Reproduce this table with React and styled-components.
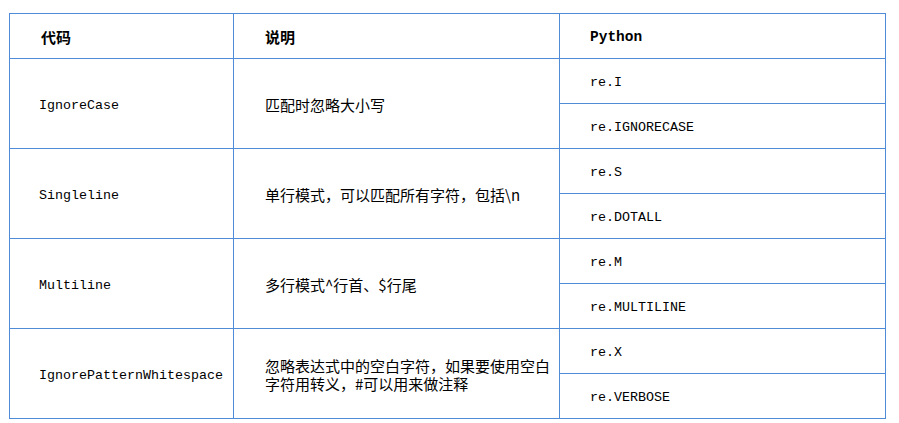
import React from 'react';
import styled, { createGlobalStyle } from 'styled-components';

const GlobalStyle = createGlobalStyle`
  html, body {
    margin: 0;
    padding: 0;
    background: #ffffff;
  }
  body {
    font-family: "Noto Sans CJK SC", sans-serif;
    color: #000;
  }
`;

const Page = styled.div`
  padding: 13px 0 0 9px;
`;

const Table = styled.table`
  border-collapse: collapse;
  table-layout: fixed;
  width: 877px;
`;

const HeadCell = styled.th`
  border: 1px solid #4f8bd6;
  height: 42px;
  padding: 2px 0 0 ${(p) => p.$pad || 30}px;
  text-align: left;
  font-weight: bold;
  font-size: ${(p) => (p.$mono ? '14.5px' : '15px')};
  font-family: ${(p) =>
    p.$mono ? '"Liberation Mono", monospace' : '"Noto Sans CJK SC", sans-serif'};
  line-height: 18px;
  vertical-align: middle;
`;

const Cell = styled.td`
  border: 1px solid #4f8bd6;
  height: ${(p) => (p.$mono ? '40px' : '42px')};
  padding: ${(p) => (p.$mono ? '4px' : '2px')} 8px 0 ${(p) => p.$pad || 30}px;
  vertical-align: middle;
  font-size: ${(p) => (p.$mono ? '13.33px' : '15px')};
  font-family: ${(p) =>
    p.$mono ? '"Liberation Mono", monospace' : '"Noto Sans CJK SC", sans-serif'};
  line-height: 18px;
  white-space: ${(p) => (p.$mono ? 'nowrap' : 'normal')};
`;

const rows = [
  { code: 'IgnoreCase', desc: '匹配时忽略大小写', py: ['re.I', 're.IGNORECASE'] },
  { code: 'Singleline', desc: '单行模式，可以匹配所有字符，包括\\n', py: ['re.S', 're.DOTALL'] },
  { code: 'Multiline', desc: '多行模式^行首、$行尾', py: ['re.M', 're.MULTILINE'] },
  {
    code: 'IgnorePatternWhitespace',
    desc: '忽略表达式中的空白字符，如果要使用空白字符用转义，#可以用来做注释',
    py: ['re.X', 're.VERBOSE'],
  },
];

export default function App() {
  return (
    <Page>
      <GlobalStyle />
      <Table>
        <colgroup>
          <col style={{ width: 224 }} />
          <col style={{ width: 326 }} />
          <col style={{ width: 326 }} />
        </colgroup>
        <thead>
          <tr>
            <HeadCell $pad={31}>代码</HeadCell>
            <HeadCell $pad={31}>说明</HeadCell>
            <HeadCell $pad={30} $mono>Python</HeadCell>
          </tr>
        </thead>
        <tbody>
          {rows.map((r) => (
            <React.Fragment key={r.code}>
              <tr>
                <Cell rowSpan={2} $mono $pad={29}>{r.code}</Cell>
                <Cell rowSpan={2} $pad={31}>{r.desc}</Cell>
                <Cell $mono $pad={30}>{r.py[0]}</Cell>
              </tr>
              <tr>
                <Cell $mono $pad={30}>{r.py[1]}</Cell>
              </tr>
            </React.Fragment>
          ))}
        </tbody>
      </Table>
    </Page>
  );
}
